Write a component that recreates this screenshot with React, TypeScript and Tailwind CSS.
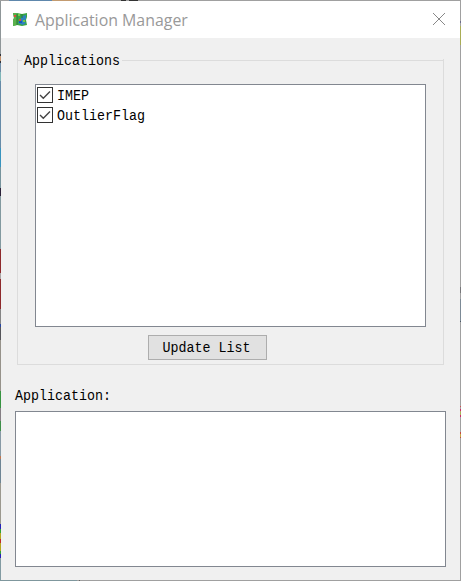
const mono = "font-['Liberation_Mono',monospace] text-[13.33px] leading-[20px] text-black whitespace-pre";

function Label({ children }: { children: string }) {
  return <span className="inline-block translate-y-[1.5px] scale-y-[1.12]">{children}</span>;
}

function MapIcon() {
  return (
    <svg width="16" height="16" viewBox="0 0 16 16">
      <path d="M1 2h4l5 1 5-1v4l-1 3 1 5-5 1-5-1-4 1V9l1-2z" fill="#3aa544" />
      <path d="M1 2h4v12l-4 1V9l1-2z" fill="#5ab04c" />
      <path d="M8 9l2-4 4-1v4l-2 2 2 2-3 2-5-2z" fill="#2f83bd" />
      <path d="M5 3v11M10 3v4" fill="none" stroke="#2b7c35" />
      <path d="M7 10h3v2H7z" fill="#1558c0" />
      <path d="M2 4h2v2H2zM7 8h2v2H7z" fill="#d84c3a" />
      <path d="M6 3h2v2H6zM11 9h2v2h-2z" fill="#72cc4a" />
    </svg>
  );
}

function CheckRow({ label }: { label: string }) {
  return (
    <div className="flex h-5 items-center">
      <span className="flex h-4 w-4 items-center justify-center border border-[#333] bg-white">
        <svg className="shrink-0" width="14" height="14" viewBox="0 0 14 14" fill="none" stroke="#444" strokeWidth="1.4">
          <path d="M2 7 5.3 10.3 12 3.6" />
        </svg>
      </span>
      <span className={`${mono} ml-1`}><Label>{label}</Label></span>
    </div>
  );
}

function LeftEdge() {
  return (
    <div className="flex w-px flex-col">
      <div className="h-[53px] bg-[#8f9698]" />
      <div className="h-[2px] bg-[#30343c]" />
      <div className="h-[5px] bg-[#c4916b]" />
      <div className="h-[2px] bg-[#30343c]" />
      <div className="h-[9px] bg-[#6d8ca6]" />
      <div className="h-[9px] bg-[#7fb6b8]" />
      <div className="h-[67px] bg-[#668ba8]" />
      <div className="h-[19px] bg-[#3793be]" />
      <div className="h-[21px] bg-[#76939c]" />
      <div className="h-[8px] bg-[#2b2138]" />
      <div className="h-[53px] bg-[#82999f]" />
      <div className="h-[24px] bg-[#8e292b]" />
      <div className="h-[6px] bg-[#aaa3a3]" />
      <div className="h-[30px] bg-[#8e292b]" />
      <div className="h-[15px] bg-[#858585]" />
      <div className="h-[3px] bg-[#2846a0]" />
      <div className="h-[13px] bg-[#55555a]" />
      <div className="h-[51px] bg-[#96928a]" />
      <div className="h-[17px] bg-[#379441]" />
      <div className="h-[13px] bg-[#857f84]" />
      <div className="h-[10px] bg-[#3e8f48]" />
      <div className="h-[25px] bg-[#8799a5]" />
      <div className="h-[3px] bg-[#bd7650]" />
      <div className="h-[24px] bg-[#6e8594]" />
      <div className="h-[41px] bg-[#9b988e]" />
      <div className="h-[5px] bg-[#2422b8]" />
      <div className="h-[4px] bg-[#30a037]" />
      <div className="h-[6px] bg-[#b4a51e]" />
      <div className="h-[4px] bg-[#bd2a25]" />
      <div className="h-[8px] bg-[#b4a51e]" />
      <div className="h-[3px] bg-[#30a037]" />
      <div className="h-[4px] bg-[#2422b8]" />
      <div className="grow bg-[#829ba2]" />
    </div>
  );
}

function RightEdge() {
  return (
    <div className="flex w-px flex-col bg-[#a0a0a0]">
      <div className="mt-[20px] h-[2px] bg-[#6c6c8a]" />
      <div className="mt-[3px] h-[19px] bg-[#a9ad55]" />
      <div className="mt-[242px] h-[6px] bg-[#77777a]" />
      <div className="mt-[6px] h-[22px] bg-[#7c8a96]" />
      <div className="h-px bg-[#4c5866]" />
      <div className="mt-[84px] h-px bg-[#d05050]" />
      <div className="mt-[2px] h-[2px] bg-[#d02868]" />
      <div className="h-[4px] bg-[#abad5a]" />
      <div className="h-[2px] bg-[#d02868]" />
      <div className="mt-[15px] h-[2px] bg-[#c44a40]" />
      <div className="h-[3px] bg-[#c4a646]" />
      <div className="h-px bg-[#c44a40]" />
    </div>
  );
}

export default function App() {
  return (
    <div className="flex h-[581px] w-[461px] flex-col overflow-hidden bg-[#f0f0f0]">
      <div className="flex h-px shrink-0 bg-[#a0a0a0]">
        <div className="ml-[9px] w-[43px] bg-[#5e87ac]" />
        <div className="w-[25px] bg-[#c39b70]" />
        <div className="ml-[44px] w-[5px] bg-[#333]" />
        <div className="ml-[3px] w-[9px] bg-[#333]" />
      </div>
      <div className="flex h-[579px]">
        <LeftEdge />
        <div className="flex w-[459px] flex-col">
          <header className="flex h-[37px] items-center bg-white pl-[11px]">
            <div className="-mt-px"><MapIcon /></div>
            <h1 className="ml-[7px] grow whitespace-nowrap font-['Open_Sans','Noto_Sans',sans-serif] text-[15.9px] leading-[22px] text-[#999]">
              Application Manager
            </h1>
            <button className="-mt-px mr-[14px]" aria-label="Close">
              <svg width="14" height="14" viewBox="0 0 14 14" fill="none" stroke="#888" strokeWidth="1">
                <path d="m1 1 12 12M13 1 1 13" />
              </svg>
            </button>
          </header>
          <main className="flex flex-col pl-[14px]">
            <fieldset className="ml-[2px] mt-[12px] h-[315px] w-[427px]">
              <div className="flex h-[20px] items-center">
                <span className="h-px w-[5px] bg-[#dcdcdc]" />
                <span className={`${mono} w-[100px] pl-[2px]`}><Label>Applications</Label></span>
                <span className="h-px grow bg-[#dcdcdc]" />
              </div>
              <div className="-mt-[11px] h-[306px] border-x border-b border-[#dcdcdc]">
                <div className="h-[25px]" />
                <div className="ml-[17px] h-[243px] w-[391px] border border-[#828790] bg-white pl-px">
                  <CheckRow label="IMEP" />
                  <CheckRow label="OutlierFlag" />
                </div>
                <button className={`${mono} ml-[130px] mt-[8px] flex h-[25px] w-[119px] items-center justify-center border border-[#adadad] bg-[#e1e1e1] pr-[2px]`}>
                  <span className="inline-block translate-y-px scale-y-[1.12]">Update List</span>
                </button>
              </div>
            </fieldset>
            <p className={`${mono} mt-[21px]`}><span className="inline-block translate-y-px scale-y-[1.12]">Application:</span></p>
            <div className="mt-[5px] h-[156px] w-[431px] border border-[#828790] bg-white" />
          </main>
        </div>
        <RightEdge />
      </div>
      <div className="flex h-px shrink-0 bg-[#a0a0a0]">
        <div className="w-[77px] bg-[#7f979d]" />
        <div className="ml-[2px] w-px bg-[#666]" />
      </div>
    </div>
  );
}
